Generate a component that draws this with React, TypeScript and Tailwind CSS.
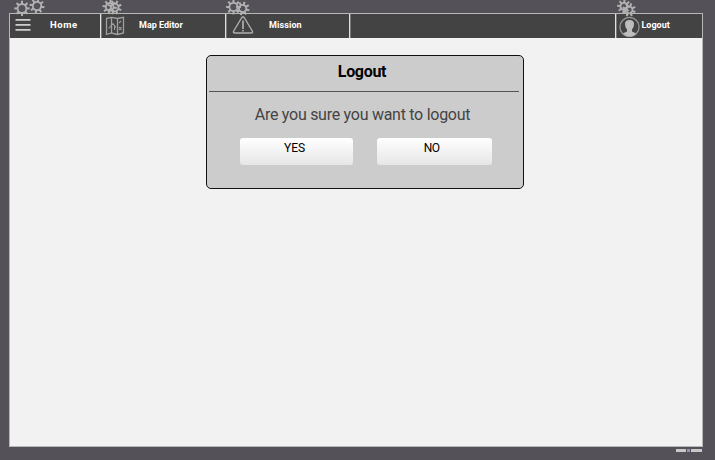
import type { ReactNode } from 'react';

const teeth = [0, 45, 90, 135, 180, 225, 270, 315];

function Gear({ cx, cy, r = 4.4, turn = 0 }: { cx: number; cy: number; r?: number; turn?: number }) {
  return (
    <g transform={`translate(${cx} ${cy}) rotate(${turn})`} fill="none" stroke="#b2b2b3">
      <circle r={r} strokeWidth="1.8" />
      {teeth.map((a) => (
        <path key={a} d={`M0 ${-r}V${-r - 3.3}`} strokeWidth="2" transform={`rotate(${a})`} />
      ))}
    </g>
  );
}

function Gears({ children }: { children: ReactNode }) {
  return (
    <svg className="pointer-events-none absolute -top-[14px] left-0 h-[22px] w-[40px]" viewBox="0 0 40 22">
      {children}
    </svg>
  );
}

function Choice({ label, className }: { label: string; className: string }) {
  return (
    <button className={`h-[27px] rounded-[3px] bg-linear-to-b from-white to-[#e6e6e6] pb-[7px] text-center text-[12px] leading-5 text-black ${className}`}>
      {label}
    </button>
  );
}

export default function App() {
  return (
    <div className="h-[460px] w-[715px] overflow-hidden bg-[#545258] pt-[13px] pl-[9px] font-['Roboto',sans-serif]">
      <main className="h-[434px] w-[694px] border border-[#b7b7b7] bg-[#f2f2f2]">
        <nav className="flex h-6 bg-[#434343] text-[9px] font-bold text-white">
          <div className="relative flex w-[91px] items-center border-r border-[#e0e0e0] shadow-[1px_0_0_#777]">
            <Gears>
              <Gear cx={12} cy={8.4} />
              <Gear cx={27} cy={6} r={4.2} turn={10} />
            </Gears>
            <svg className="ml-[5px] h-4 w-4" viewBox="0 0 16 16" stroke="#cecece" strokeWidth="1.8">
              <path d="M.5 1.8h15M.5 6.8h15M.5 11.8h15" />
            </svg>
            <span className="ml-[19px] pb-[2px] text-[9.5px] tracking-[0.6px]">Home</span>
          </div>
          <div className="relative flex w-[125px] items-center border-r border-[#e0e0e0] shadow-[1px_0_0_#777]">
            <Gears>
              <Gear cx={8.7} cy={7} r={3.8} turn={8} />
              <Gear cx={13.7} cy={7.5} r={3.8} turn={22} />
            </Gears>
            <svg className="ml-[4px] h-5 w-5" viewBox="0 0 20 20" fill="none" stroke="#a0a0a0" strokeWidth="1.3">
              <path d="M1.5 2.5L6.5 1.3L12.5 2.5L18.5 1.3V17L12.5 18.5L6.5 17L1.5 18.5ZM6.5 1.5V17M12.5 2.5V18.5" />
              <path d="M3.5 12.5L8 7.5L11 11.5M9.5 9.5V14M14 7L16 5M14 11l2.5 3m0-3L14 14" strokeWidth="1.1" />
            </svg>
            <span className="ml-[14px]">Map Editor</span>
          </div>
          <div className="relative flex w-[124px] items-center border-r border-[#e0e0e0] shadow-[1px_0_0_#777]">
            <Gears>
              <Gear cx={7.5} cy={7} r={4.1} />
              <Gear cx={16.7} cy={8.5} r={3.6} turn={16} />
            </Gears>
            <svg className="ml-[6px] h-5 w-[22px]" viewBox="0 0 22 20" fill="none" stroke="#b0b0b0" strokeWidth="1.4" strokeLinejoin="round">
              <path d="M11 1Q10 1 9.5 2L1.7 15Q.8 17 3 17H19Q21.2 17 20.3 15L12.5 2Q12 1 11 1Z" />
              <path d="M11 4.5V13M11 14V15.4" strokeWidth="1.7" />
            </svg>
            <span className="ml-[15px] tracking-[0.1px]">Mission</span>
          </div>
          <div className="w-[266px] border-r border-[#e0e0e0] shadow-[1px_0_0_#777]" />
          <div className="relative flex flex-1 items-center">
            <Gears>
              <Gear cx={8} cy={6.3} r={3.5} turn={4} />
              <Gear cx={13} cy={9.8} r={3.5} turn={20} />
            </Gears>
            <svg className="ml-[2.5px] h-[22px] w-[21px]" viewBox="0 0 21 22">
              <circle cx="10.5" cy="12" r="9.6" fill="none" stroke="#999" strokeWidth="1.2" />
              <path d="M6 9Q6 5 10.5 5T15 9Q15 12.5 13 14.5V16.5Q14 17.3 17 18.3Q14.5 21.5 10.5 21.5T4 18.3Q7 17.3 8 16.5V14.5Q6 12.5 6 9Z" fill="#bdbdbd" />
            </svg>
            <span className="ml-[2px]">Logout</span>
          </div>
        </nav>
        <section className="mt-[17px] ml-[196px] h-[134px] w-[318px] rounded-[5px] border border-[#111] bg-[#ccc] px-[2px]">
          <h1 className="h-[36px] w-[310px] border-b border-[#555] pt-[6px] pr-[4px] text-center text-[16px] leading-5 font-bold tracking-[-0.3px] text-black">Logout</h1>
          <p className="mt-[11px] pr-[5px] text-center text-[16px] leading-6 tracking-[-0.27px] text-[#444]">Are you sure you want to logout</p>
          <div className="mt-[11px] ml-[31px] flex gap-[24px]">
            <Choice label="YES" className="w-[113px] pr-[4px] tracking-[-0.1px]" />
            <Choice label="NO" className="w-[115px] pr-[6px] tracking-[-0.7px]" />
          </div>
        </section>
      </main>
      <footer className="mt-[2px] ml-[667px] flex h-[3px] w-[26px] gap-[1px]">
        <i className="w-[10px] bg-[#c8c8c8]" />
        <i className="w-1 bg-[#9194aa]" />
        <i className="w-[11px] bg-[#c8c8c8]" />
      </footer>
    </div>
  );
}
